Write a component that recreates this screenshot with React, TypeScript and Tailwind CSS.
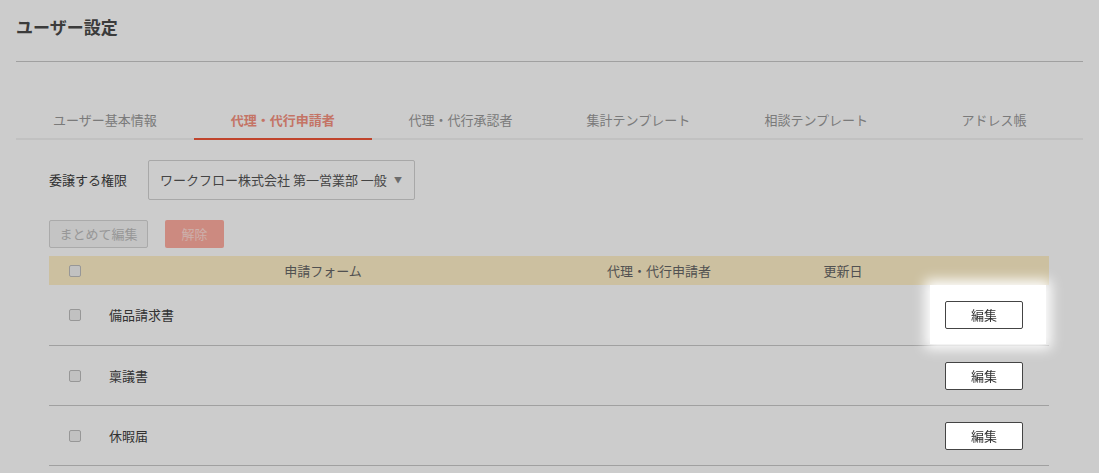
import React from 'react';

const tabs = ['ユーザー基本情報', '代理・代行申請者', '代理・代行承認者', '集計テンプレート', '相談テンプレート', 'アドレス帳'];
const rows = ['備品請求書', '稟議書', '休暇届'];

const Box: React.FC = () => (
  <span className="block w-[12px] h-[12px] rounded-[2px] border border-[#bdbdbd] bg-[#f2f2f2]" />
);

const App: React.FC = () => {
  return (
    <div className="relative min-h-[473px] bg-white px-[16px] font-['Noto_Sans_CJK_JP','Noto_Sans',sans-serif] text-[13px] text-[#444]">
      <div className="h-[62px] border-b border-[#c8c8c8] pt-[15px]">
        <h1 className="text-[17px] font-bold leading-[24px] text-[#4a4a4a]">ユーザー設定</h1>
      </div>

      <div className="mt-[48px] flex">
        {tabs.map((t, i) => (
          <div
            key={t}
            className={
              i === 1
                ? 'flex-1 border-b-2 border-[#f05538] pb-[8px] text-center font-bold leading-[20px] text-[#f5917f]'
                : 'flex-1 border-b-2 border-[#f2f2f2] pb-[8px] text-center leading-[20px] text-[#999]'
            }
          >
            {t}
          </div>
        ))}
      </div>

      <div className="px-[33px]">
        <div className="mt-[20px] flex items-center gap-[21px]">
          <span className="leading-[20px] text-[#3d3d3d]">委譲する権限</span>
          <div className="flex h-[40px] w-[267px] items-center justify-between rounded-[2px] border border-[#d2d2d2] pl-[11px] pr-[12px]">
            <span className="leading-[20px] text-[#555]">ワークフロー株式会社 第一営業部 一般</span>
            <span className="text-[8px] text-[#888]">▼</span>
          </div>
        </div>

        <div className="mt-[20px] flex gap-[17px]">
          <button className="h-[28px] w-[99px] rounded-[2px] border border-[#d5d5d5] bg-[#f5f5f5] text-[13px] leading-[20px] text-[#bdbdbd]">
            まとめて編集
          </button>
          <button className="h-[28px] w-[59px] rounded-[2px] bg-[#ffada0] text-[13px] leading-[20px] text-[#ffdcd6]">
            解除
          </button>
        </div>

        <div className="mt-[8px] w-[1000px]">
          <div className="grid h-[29px] grid-cols-[51px_446px_226px_142px_135px] items-center bg-[#fff0c8] text-[#666]">
            <div className="flex justify-center pl-[1px]"><Box /></div>
            <div className="text-center">申請フォーム</div>
            <div className="text-center">代理・代行申請者</div>
            <div className="text-center">更新日</div>
            <div />
          </div>
          {rows.map((r, i) => (
            <div
              key={r}
              className={
                i === 0
                  ? 'relative grid h-[61px] grid-cols-[51px_446px_226px_142px_135px] items-center border-b border-[#c8c8c8]'
                  : 'relative grid h-[60px] grid-cols-[51px_446px_226px_142px_135px] items-center border-b border-[#c8c8c8]'
              }
            >
              <div className="flex justify-center pl-[1px]"><Box /></div>
              <div className="pl-[9px] text-[#404040]">{r}</div>
              <div />
              <div />
              <div className="flex justify-center pl-[5px]">
                <button className="relative z-30 h-[28px] w-[78px] rounded-[2px] border border-[#444] bg-white text-[13px] text-[#333]">
                  編集
                </button>
              </div>
              {i === 0 && (
                <div className="absolute left-[881px] top-[0px] z-20 h-[59px] w-[116px] bg-white shadow-[0_0_12px_5px_#fff]" />
              )}
            </div>
          ))}
        </div>
      </div>

      <div className="fixed inset-0 z-10 bg-black/20" />
    </div>
  );
};

export default App;
